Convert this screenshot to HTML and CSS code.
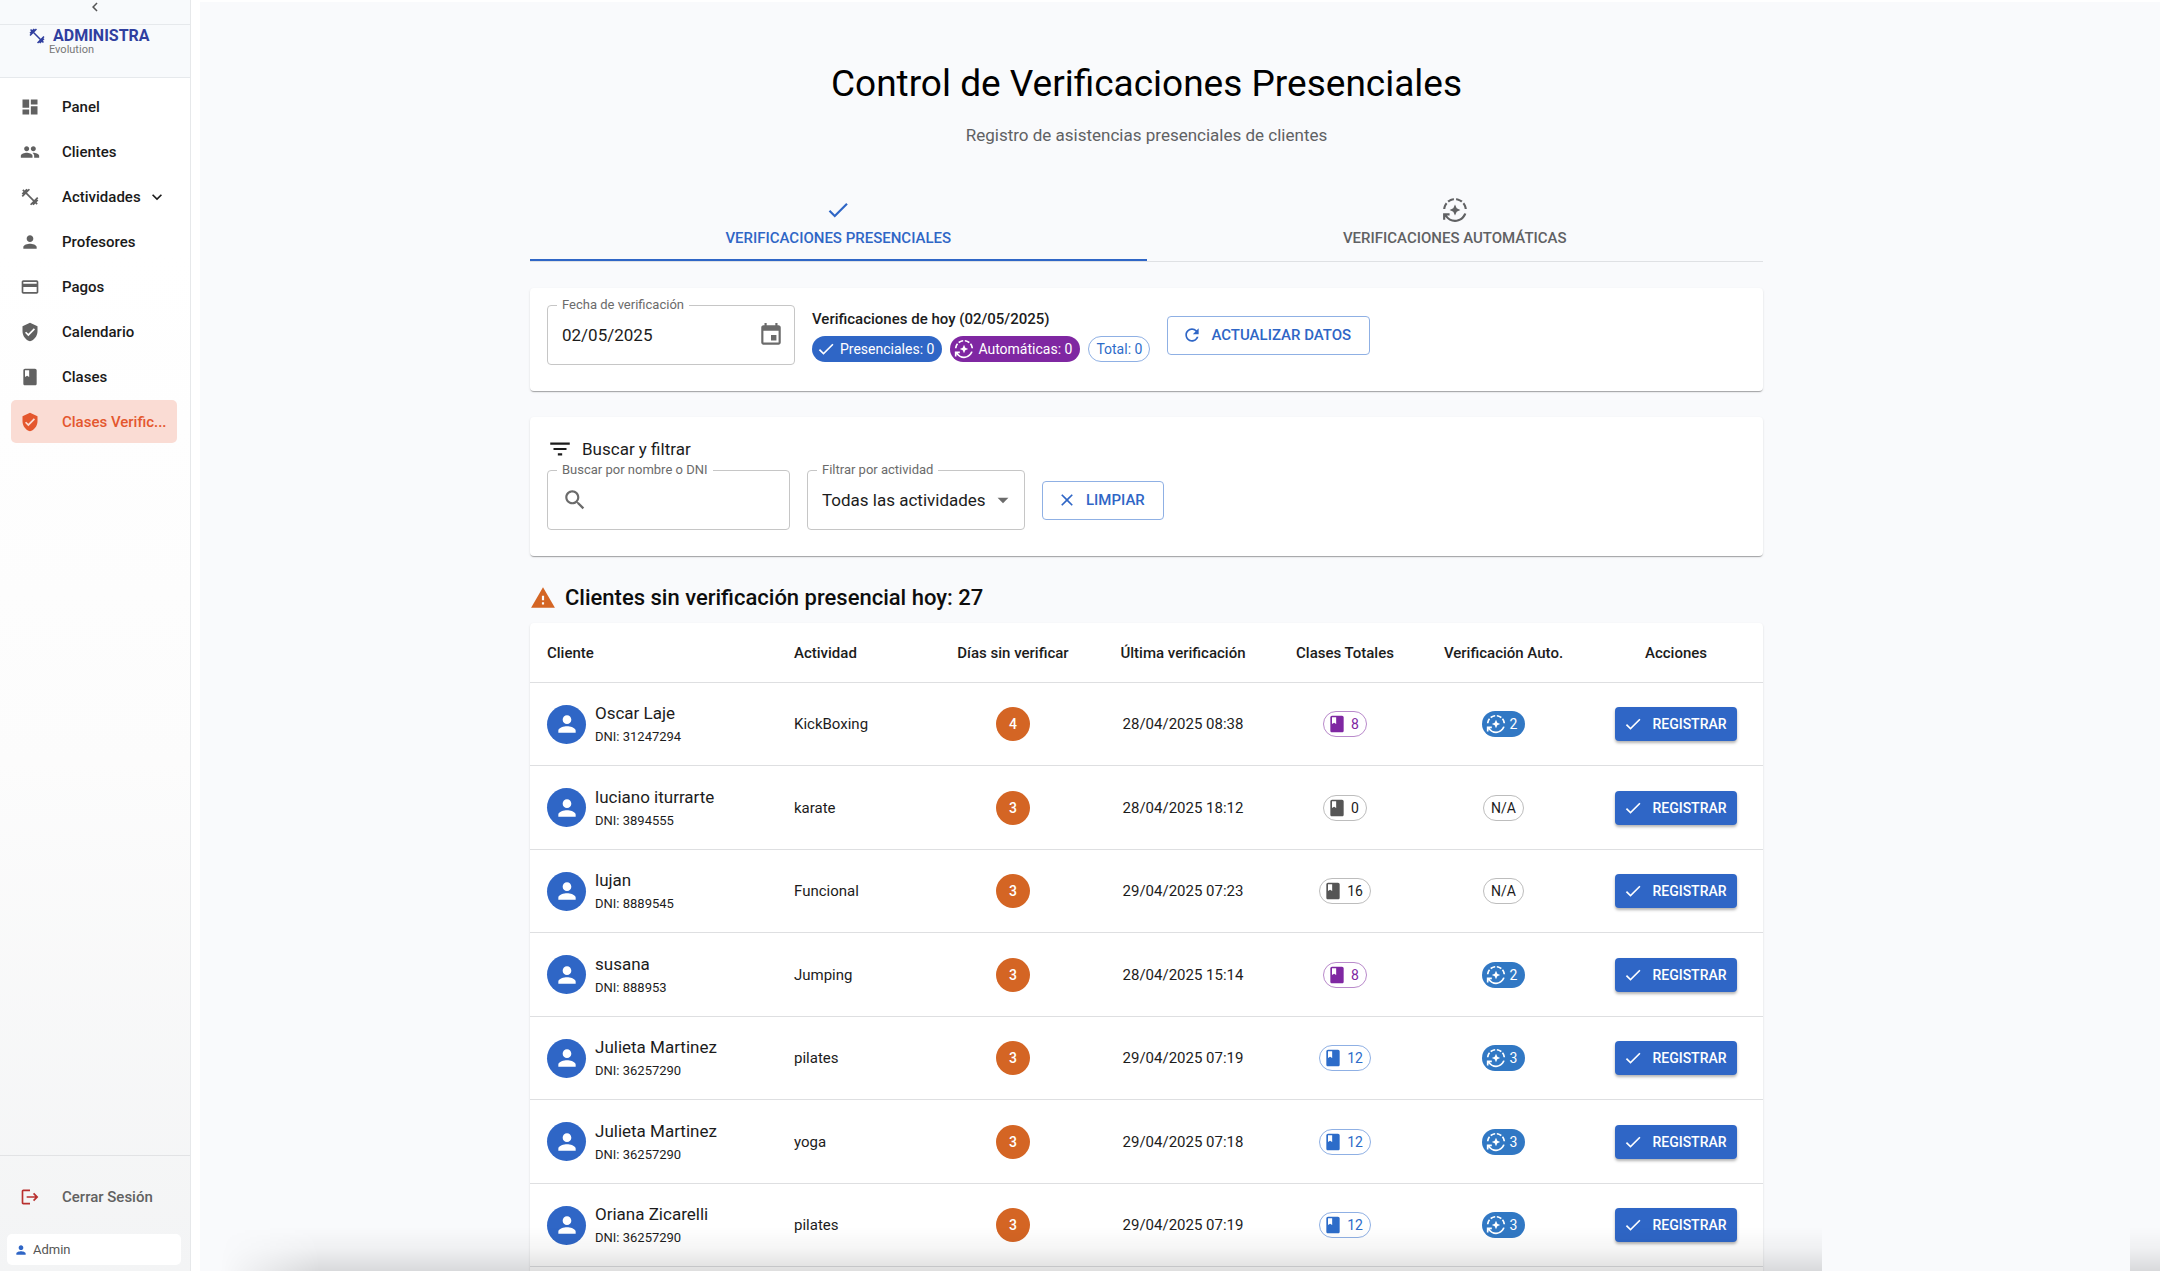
FILE: index.html
```html
<!DOCTYPE html>
<html lang="es">
<head>
<meta charset="utf-8">
<meta name="viewport" content="width=device-width, initial-scale=1">
<title>Control de Verificaciones Presenciales</title>
<link rel="stylesheet" href="styles.css">
</head>
<body>
<svg class="sprite" aria-hidden="true">
  <symbol id="i-check" viewBox="0 0 24 24"><path d="M9 16.17 4.83 12l-1.42 1.41L9 19 21 7l-1.41-1.41z"/></symbol>
  <symbol id="i-auto" viewBox="0 0 24 24"><path d="M19.03 3.56c-1.67-1.39-3.74-2.3-6.03-2.51v2.01c1.73.19 3.31.88 4.61 1.92l1.42-1.42zM11 3.06V1.05c-2.29.2-4.36 1.12-6.03 2.51l1.42 1.42C7.69 3.94 9.27 3.25 11 3.06zM4.98 6.39 3.56 4.97C2.17 6.64 1.26 8.71 1.05 11h2.01c.19-1.73.88-3.31 1.92-4.61zM20.94 11h2.01c-.21-2.29-1.12-4.36-2.51-6.03l-1.42 1.42c1.04 1.3 1.73 2.88 1.92 4.61zM7 12l3.44 1.56L12 17l1.56-3.44L17 12l-3.44-1.56L12 7l-1.56 3.44zM12 21c-3.11 0-5.85-1.59-7.46-4H7v-2H1v6h2v-2.7c1.99 2.84 5.27 4.7 9 4.7 4.87 0 9-3.17 10.44-7.56l-1.96-.45C19.25 18.48 15.92 21 12 21z"/></symbol>
  <symbol id="i-book" viewBox="0 0 24 24"><path d="M18 2H6c-1.1 0-2 .9-2 2v16c0 1.1.9 2 2 2h12c1.1 0 2-.9 2-2V4c0-1.1-.9-2-2-2zM6 4h5v8l-2.5-1.5L6 12V4z"/></symbol>
  <symbol id="i-shield" viewBox="0 0 24 24"><path d="M12 1 3 5v6c0 5.55 3.84 10.74 9 12 5.16-1.26 9-6.45 9-12V5l-9-4zm-2 16-4-4 1.41-1.41L10 14.17l6.59-6.59L18 9l-8 8z"/></symbol>
  <symbol id="i-dashboard" viewBox="0 0 24 24"><path d="M3 13h8V3H3v10zm0 8h8v-6H3v6zm10 0h8V11h-8v10zm0-18v6h8V3h-8z"/></symbol>
  <symbol id="i-people" viewBox="0 0 24 24"><path d="M16 11c1.66 0 2.99-1.34 2.99-3S17.66 5 16 5c-1.66 0-3 1.34-3 3s1.34 3 3 3zm-8 0c1.66 0 2.99-1.34 2.99-3S9.66 5 8 5C6.34 5 5 6.34 5 8s1.34 3 3 3zm0 2c-2.33 0-7 1.17-7 3.5V19h14v-2.5c0-2.33-4.67-3.5-7-3.5zm8 0c-.29 0-.62.02-.97.05 1.16.84 1.97 1.97 1.97 3.45V19h6v-2.5c0-2.33-4.67-3.5-7-3.5z"/></symbol>
  <symbol id="i-person" viewBox="0 0 24 24"><path d="M12 12c2.21 0 4-1.79 4-4s-1.79-4-4-4-4 1.79-4 4 1.79 4 4 4zm0 2c-2.67 0-8 1.34-8 4v2h16v-2c0-2.66-5.33-4-8-4z"/></symbol>
  <symbol id="i-card" viewBox="0 0 24 24"><path d="M20 4H4c-1.11 0-1.99.89-1.99 2L2 18c0 1.11.89 2 2 2h16c1.11 0 2-.89 2-2V6c0-1.11-.89-2-2-2zm0 14H4v-6h16v6zm0-10H4V6h16v2z"/></symbol>
  <symbol id="i-gym" viewBox="0 0 24 24"><path d="M20.57 14.86 22 13.43 20.57 12 17 15.57 8.43 7 12 3.43 10.57 2 9.14 3.43 7.71 2 5.57 4.14 4.14 2.71 2.71 4.14l1.43 1.43L2 7.71l1.43 1.43L2 10.57 3.43 12 7 8.43 15.57 17 12 20.57 13.43 22l1.43-1.43L16.29 22l2.14-2.14 1.43 1.43 1.43-1.43-1.43-1.43L22 16.29z"/></symbol>
  <symbol id="i-logout" viewBox="0 0 24 24"><path d="m17 7-1.41 1.41L18.17 11H8v2h10.17l-2.58 2.58L17 17l5-5zM4 5h8V3H4c-1.1 0-2 .9-2 2v14c0 1.1.9 2 2 2h8v-2H4V5z"/></symbol>
  <symbol id="i-left" viewBox="0 0 24 24"><path d="M15.41 7.41 14 6l-6 6 6 6 1.41-1.41L10.83 12z"/></symbol>
  <symbol id="i-down" viewBox="0 0 24 24"><path d="M16.59 8.59 12 13.17 7.41 8.59 6 10l6 6 6-6z"/></symbol>
  <symbol id="i-event" viewBox="0 0 24 24"><path d="M17 12h-5v5h5v-5zM16 1v2H8V1H6v2H5c-1.11 0-1.99.9-1.99 2L3 19c0 1.1.89 2 2 2h14c1.1 0 2-.9 2-2V5c0-1.1-.9-2-2-2h-1V1h-2zm3 18H5V8h14v11z"/></symbol>
  <symbol id="i-refresh" viewBox="0 0 24 24"><path d="M17.65 6.35C16.2 4.9 14.21 4 12 4c-4.42 0-7.99 3.58-7.99 8s3.57 8 7.99 8c3.73 0 6.84-2.55 7.73-6h-2.08c-.82 2.33-3.04 4-5.65 4-3.31 0-6-2.69-6-6s2.69-6 6-6c1.66 0 3.14.69 4.22 1.78L13 11h7V4l-2.35 2.35z"/></symbol>
  <symbol id="i-close" viewBox="0 0 24 24"><path d="M19 6.41 17.59 5 12 10.59 6.41 5 5 6.41 10.59 12 5 17.59 6.41 19 12 13.41 17.59 19 19 17.59 13.41 12z"/></symbol>
  <symbol id="i-search" viewBox="0 0 24 24"><path d="M15.5 14h-.79l-.28-.27C15.41 12.59 16 11.11 16 9.5 16 5.91 13.09 3 9.5 3S3 5.91 3 9.5 5.91 16 9.5 16c1.61 0 3.09-.59 4.23-1.57l.27.28v.79l5 4.99L20.49 19l-4.99-5zm-6 0C7.01 14 5 11.99 5 9.5S7.01 5 9.5 5 14 7.01 14 9.5 11.99 14 9.5 14z"/></symbol>
  <symbol id="i-filter" viewBox="0 0 24 24"><path d="M10 18h4v-2h-4v2zM3 6v2h18V6H3zm3 7h12v-2H6v2z"/></symbol>
  <symbol id="i-warning" viewBox="0 0 24 24"><path d="M1 21h22L12 2 1 21zm12-3h-2v-2h2v2zm0-4h-2v-4h2v4z"/></symbol>
  <symbol id="i-drop" viewBox="0 0 24 24"><path d="m7 10 5 5 5-5z"/></symbol>
</svg>

<div class="app">
  <aside class="sidebar">
    <div class="sidebar-top"><button class="collapse" type="button" aria-label="Contraer menú"><svg class="icon s"><use href="#i-left"/></svg></button></div>
    <div class="brand">
      <div class="brand-name"><svg class="icon s"><use href="#i-gym"/></svg>ADMINISTRA</div>
      <div class="brand-sub">Evolution</div>
    </div>
    <nav class="nav">
      <a href="#"><svg class="icon m"><use href="#i-dashboard"/></svg><span>Panel</span></a>
      <a href="#"><svg class="icon m"><use href="#i-people"/></svg><span>Clientes</span></a>
      <a href="#"><svg class="icon m"><use href="#i-gym"/></svg><span>Actividades</span><svg class="icon m chevron"><use href="#i-down"/></svg></a>
      <a href="#"><svg class="icon m"><use href="#i-person"/></svg><span>Profesores</span></a>
      <a href="#"><svg class="icon m"><use href="#i-card"/></svg><span>Pagos</span></a>
      <a href="#"><svg class="icon m"><use href="#i-shield"/></svg><span>Calendario</span></a>
      <a href="#"><svg class="icon m"><use href="#i-book"/></svg><span>Clases</span></a>
      <a href="#" class="active" aria-current="page"><svg class="icon m"><use href="#i-shield"/></svg><span>Clases Verific...</span></a>
    </nav>
    <div class="sidebar-foot">
      <a href="#" class="logout"><svg class="icon m"><use href="#i-logout"/></svg><span>Cerrar Sesión</span></a>
      <div class="user"><svg class="icon xs"><use href="#i-person"/></svg>Admin</div>
    </div>
  </aside>

  <main class="main">
    <div class="container">
      <h1>Control de Verificaciones Presenciales</h1>
      <p class="subtitle">Registro de asistencias presenciales de clientes</p>

      <div class="tabs" role="tablist">
        <button type="button" role="tab" aria-selected="true" class="tab selected"><svg class="icon xl"><use href="#i-check"/></svg>VERIFICACIONES PRESENCIALES</button>
        <button type="button" role="tab" aria-selected="false" class="tab"><svg class="icon xl"><use href="#i-auto"/></svg>VERIFICACIONES AUTOMÁTICAS</button>
      </div>

      <section class="card row">
        <div class="field date">
          <label for="fecha">Fecha de verificación</label>
          <input id="fecha" type="text" value="02/05/2025">
          <button type="button" class="icon-button" aria-label="Elegir fecha"><svg class="icon xl"><use href="#i-event"/></svg></button>
        </div>
        <div class="summary">
          <h2>Verificaciones de hoy (02/05/2025)</h2>
          <div class="chips">
            <span class="chip primary"><svg class="icon m"><use href="#i-check"/></svg>Presenciales: 0</span>
            <span class="chip purple"><svg class="icon m"><use href="#i-auto"/></svg>Automáticas: 0</span>
            <span class="chip line-blue">Total: 0</span>
          </div>
        </div>
        <button type="button" class="btn outlined"><svg class="icon m"><use href="#i-refresh"/></svg>ACTUALIZAR DATOS</button>
      </section>

      <section class="card">
        <h2 class="filter-title"><svg class="icon xl"><use href="#i-filter"/></svg>Buscar y filtrar</h2>
        <div class="row">
          <div class="field search">
            <label for="buscar">Buscar por nombre o DNI</label>
            <svg class="icon xl"><use href="#i-search"/></svg>
            <input id="buscar" type="text">
          </div>
          <div class="field activity">
            <label for="actividad">Filtrar por actividad</label>
            <select id="actividad"><option>Todas las actividades</option></select>
            <svg class="icon xl drop"><use href="#i-drop"/></svg>
          </div>
          <button type="button" class="btn outlined"><svg class="icon m"><use href="#i-close"/></svg>LIMPIAR</button>
        </div>
      </section>

      <h2 class="section-title"><svg class="icon xl"><use href="#i-warning"/></svg>Clientes sin verificación presencial hoy: 27</h2>

      <div class="table-card">
        <table>
          <colgroup><col class="c1"><col class="c2"><col class="c3"><col class="c4"><col class="c5"><col class="c6"><col class="c7"></colgroup>
          <thead>
            <tr><th scope="col">Cliente</th><th scope="col">Actividad</th><th scope="col">Días sin verificar</th><th scope="col">Última verificación</th><th scope="col">Clases Totales</th><th scope="col">Verificación Auto.</th><th scope="col">Acciones</th></tr>
          </thead>
          <tbody>
            <tr>
              <td><div class="client"><span class="avatar"><svg class="icon xl"><use href="#i-person"/></svg></span><div><div class="name">Oscar Laje</div><div class="dni">DNI: 31247294</div></div></div></td>
              <td>KickBoxing</td><td><span class="days">4</span></td><td>28/04/2025 08:38</td>
              <td><span class="chip line-purple"><svg class="icon m"><use href="#i-book"/></svg>8</span></td>
              <td><span class="chip info"><svg class="icon m"><use href="#i-auto"/></svg>2</span></td>
              <td><button type="button" class="btn filled"><svg class="icon m"><use href="#i-check"/></svg>REGISTRAR</button></td>
            </tr>
            <tr>
              <td><div class="client"><span class="avatar"><svg class="icon xl"><use href="#i-person"/></svg></span><div><div class="name">luciano iturrarte</div><div class="dni">DNI: 3894555</div></div></div></td>
              <td>karate</td><td><span class="days">3</span></td><td>28/04/2025 18:12</td>
              <td><span class="chip line-gray"><svg class="icon m"><use href="#i-book"/></svg>0</span></td>
              <td><span class="chip line-gray">N/A</span></td>
              <td><button type="button" class="btn filled"><svg class="icon m"><use href="#i-check"/></svg>REGISTRAR</button></td>
            </tr>
            <tr>
              <td><div class="client"><span class="avatar"><svg class="icon xl"><use href="#i-person"/></svg></span><div><div class="name">lujan</div><div class="dni">DNI: 8889545</div></div></div></td>
              <td>Funcional</td><td><span class="days">3</span></td><td>29/04/2025 07:23</td>
              <td><span class="chip line-gray"><svg class="icon m"><use href="#i-book"/></svg>16</span></td>
              <td><span class="chip line-gray">N/A</span></td>
              <td><button type="button" class="btn filled"><svg class="icon m"><use href="#i-check"/></svg>REGISTRAR</button></td>
            </tr>
            <tr>
              <td><div class="client"><span class="avatar"><svg class="icon xl"><use href="#i-person"/></svg></span><div><div class="name">susana</div><div class="dni">DNI: 888953</div></div></div></td>
              <td>Jumping</td><td><span class="days">3</span></td><td>28/04/2025 15:14</td>
              <td><span class="chip line-purple"><svg class="icon m"><use href="#i-book"/></svg>8</span></td>
              <td><span class="chip info"><svg class="icon m"><use href="#i-auto"/></svg>2</span></td>
              <td><button type="button" class="btn filled"><svg class="icon m"><use href="#i-check"/></svg>REGISTRAR</button></td>
            </tr>
            <tr>
              <td><div class="client"><span class="avatar"><svg class="icon xl"><use href="#i-person"/></svg></span><div><div class="name">Julieta Martinez</div><div class="dni">DNI: 36257290</div></div></div></td>
              <td>pilates</td><td><span class="days">3</span></td><td>29/04/2025 07:19</td>
              <td><span class="chip line-blue"><svg class="icon m"><use href="#i-book"/></svg>12</span></td>
              <td><span class="chip info"><svg class="icon m"><use href="#i-auto"/></svg>3</span></td>
              <td><button type="button" class="btn filled"><svg class="icon m"><use href="#i-check"/></svg>REGISTRAR</button></td>
            </tr>
            <tr>
              <td><div class="client"><span class="avatar"><svg class="icon xl"><use href="#i-person"/></svg></span><div><div class="name">Julieta Martinez</div><div class="dni">DNI: 36257290</div></div></div></td>
              <td>yoga</td><td><span class="days">3</span></td><td>29/04/2025 07:18</td>
              <td><span class="chip line-blue"><svg class="icon m"><use href="#i-book"/></svg>12</span></td>
              <td><span class="chip info"><svg class="icon m"><use href="#i-auto"/></svg>3</span></td>
              <td><button type="button" class="btn filled"><svg class="icon m"><use href="#i-check"/></svg>REGISTRAR</button></td>
            </tr>
            <tr>
              <td><div class="client"><span class="avatar"><svg class="icon xl"><use href="#i-person"/></svg></span><div><div class="name">Oriana Zicarelli</div><div class="dni">DNI: 36257290</div></div></div></td>
              <td>pilates</td><td><span class="days">3</span></td><td>29/04/2025 07:19</td>
              <td><span class="chip line-blue"><svg class="icon m"><use href="#i-book"/></svg>12</span></td>
              <td><span class="chip info"><svg class="icon m"><use href="#i-auto"/></svg>3</span></td>
              <td><button type="button" class="btn filled"><svg class="icon m"><use href="#i-check"/></svg>REGISTRAR</button></td>
            </tr>
          </tbody>
        </table>
      </div>
    </div>
  </main>
</div>
<div class="shade shade-left"></div>
<div class="shade shade-right"></div>
</body>
</html>
```

FILE: styles.css
```css
:root {
  --blue: #2f66c6;
  --blue-line: #8fb0e4;
  --purple: #7f27a2;
  --info: #3178c4;
  --orange: #d46524;
  --text: #1c1c1c;
  --muted: #606163;
  --bg: #f9fafc;
}
* { box-sizing: border-box; }
body {
  margin: 0;
  font-family: Roboto, "Liberation Sans", sans-serif;
  font-size: 15px;
  line-height: 22px;
  color: var(--text);
  background: #fff;
}
h1, h2, p { margin: 0; }
button, input, select { font: inherit; color: inherit; }
button { cursor: pointer; }
.sprite { display: none; }
.icon { fill: currentColor; flex: none; display: block; }
.xs { width: 14px; height: 14px; }
.s { width: 18px; height: 18px; }
.m { width: 20px; height: 20px; }
.xl { width: 26px; height: 26px; }

.app {
  display: grid;
  grid-template-columns: 191px minmax(0, 1fr);
  height: 100vh;
  overflow: hidden;
}

/* Sidebar */
.sidebar {
  display: flex;
  flex-direction: column;
  border-right: 1px solid #e6e8ea;
  background: linear-gradient(#fff 20%, #fcfcfc 60%, #f3f4f5);
}
.sidebar-top {
  display: flex;
  justify-content: center;
  height: 25px;
  border-bottom: 1px solid #e6e9ec;
  background: #f8fafc;
}
.collapse {
  align-self: flex-start;
  height: 14px;
  padding: 0;
  border: 0;
  background: none;
  color: #555;
  display: flex;
  align-items: center;
}
.brand {
  height: 53px;
  padding: 2px 28px;
  border-bottom: 1px solid #e6e9ec;
  background: #f8fafc;
}
.brand-name {
  display: flex;
  align-items: center;
  gap: 7px;
  height: 17px;
  font-weight: 700;
  font-size: 16px;
  color: #303f9f;
}
.brand-sub { padding-left: 21px; font-size: 11px; line-height: 12px; color: #777; }
.nav { display: flex; flex-direction: column; gap: 2px; padding: 7px 13px 0 11px; }
.nav a, .logout {
  display: flex;
  align-items: center;
  height: 43px;
  padding: 0 9px;
  border-radius: 5px;
  color: #1a1a1a;
  font-weight: 500;
  text-decoration: none;
}
.nav .icon, .logout .icon { color: #616161; }
.nav span, .logout span { margin-left: 22px; white-space: nowrap; }
.nav .chevron { margin-left: 6px; color: #1a1a1a; }
.nav .active { background: #fadcd4; color: #e4572e; }
.nav .active .icon { color: #e4572e; }
.sidebar-foot {
  margin-top: auto;
  padding: 19px 9px 6px 7px;
  border-top: 1px solid #e2e3e5;
}
.logout { margin-bottom: 16px; padding: 0 13px; color: #616161; }
.logout .icon { color: #b8302f; }
.user {
  display: flex;
  align-items: center;
  gap: 5px;
  height: 31px;
  padding: 0 7px;
  border-radius: 5px;
  background: #fff;
  font-size: 13px;
  color: #555;
}
.user .icon { color: var(--blue); }

/* Main column */
.main {
  margin: 2px 0 0 9px;
  padding: 55px 67px 0 0;
  background: var(--bg);
  overflow: hidden;
}
.container { max-width: 1233px; margin: 0 auto; }
h1 {
  font-size: 37px;
  line-height: 54px;
  font-weight: 400;
  text-align: center;
  color: #000;
}
.subtitle {
  margin-top: 12px;
  font-size: 17px;
  line-height: 24px;
  text-align: center;
  color: var(--muted);
}
.tabs {
  display: grid;
  grid-template-columns: 1fr 1fr;
  margin: 38px 0 26px;
  border-bottom: 1px solid #dfe1e4;
}
.tab {
  display: flex;
  flex-direction: column;
  align-items: center;
  gap: 4px;
  padding: 12px 0 10px;
  border: 0;
  border-bottom: 2px solid transparent;
  background: none;
  font-weight: 500;
  color: var(--muted);
}
.tab.selected { color: var(--blue); border-color: var(--blue); }

.card, .table-card {
  border-radius: 4px;
  background: #fff;
  box-shadow: 0 2px 1px -1px rgba(0,0,0,.2), 0 1px 1px rgba(0,0,0,.14), 0 1px 3px rgba(0,0,0,.08);
}
.card { padding: 17px 17px 26px; margin-bottom: 26px; }
.row { display: flex; align-items: center; gap: 17px; }

.field {
  position: relative;
  display: flex;
  align-items: center;
  height: 60px;
  padding: 0 14px;
  border: 1px solid #c6c6c6;
  border-radius: 4px;
  color: #6b6b6b;
}
.field label {
  position: absolute;
  top: -9px;
  left: 9px;
  padding: 0 5px;
  background: #fff;
  font-size: 13px;
  line-height: 16px;
  color: #6b6b6b;
}
.field input, .field select {
  flex: 1;
  min-width: 0;
  height: 40px;
  padding: 0;
  border: 0;
  outline: 0;
  background: none;
  appearance: none;
  font-size: 17px;
  color: var(--text);
}
.date { width: 248px; }
.date, .activity { padding-right: 8px; }
.search { width: 243px; }
.activity { width: 218px; }
.icon-button { padding: 0; border: 0; background: none; color: #6b6b6b; }
.date .icon-button { margin-right: 2px; }
.drop { pointer-events: none; }

.summary h2 { font-size: 15px; line-height: 22px; font-weight: 500; }
.chips { display: flex; gap: 8px; margin-top: 6px; }
.chip {
  display: inline-flex;
  align-items: center;
  justify-content: center;
  gap: 4px;
  height: 26px;
  padding: 0 7px 0 3px;
  border: 1px solid transparent;
  border-radius: 13px;
  font-size: 14px;
  line-height: 16px;
  vertical-align: middle;
}
.chip.primary { background: var(--blue); color: #fff; }
.chip.purple { background: var(--purple); color: #fff; }
.chip.info { background: var(--info); color: #fff; }
.chip.line-blue { border-color: var(--blue-line); color: #2d6cc9; }
.chip.line-purple { border-color: #b98acb; color: var(--purple); }
.chip.line-gray { border-color: #bdbdbd; color: var(--text); }
.chip.line-gray .icon { color: #555; }
.chip:not(:has(svg)) { padding: 0 7px; }

.btn {
  display: inline-flex;
  align-items: center;
  gap: 9px;
  border-radius: 4px;
  font-weight: 500;
  vertical-align: middle;
}
.btn.outlined {
  height: 39px;
  padding: 0 18px 0 14px;
  border: 1px solid var(--blue-line);
  background: #fff;
  color: var(--blue);
}
.btn.filled {
  height: 34px;
  padding: 0 10px 0 8px;
  border: 0;
  background: var(--blue);
  color: #fff;
  font-size: 14px;
  box-shadow: 0 2px 3px rgba(0,0,0,.3);
}

.filter-title {
  display: flex;
  align-items: center;
  gap: 9px;
  height: 36px;
  font-size: 17px;
  font-weight: 400;
  padding-bottom: 6px;
}
.section-title {
  display: flex;
  align-items: center;
  gap: 9px;
  height: 32px;
  margin-bottom: 9px;
  font-size: 22px;
  font-weight: 500;
  color: #0d0d0d;
}
.section-title .icon { color: var(--orange); }

/* Client table */
.table-card { padding-bottom: 32px; }
table { width: 100%; border-collapse: separate; border-spacing: 0; table-layout: fixed; }
.c1 { width: 247px; }
.c2 { width: 155px; }
.c3 { width: 162px; }
.c4 { width: 178px; }
.c5 { width: 146px; }
.c6 { width: 171px; }
.c7 { width: 174px; }
th, td { padding: 0; border-bottom: 1px solid #dedfe1; text-align: center; white-space: nowrap; }
th:nth-child(-n+2), td:nth-child(-n+2) { text-align: left; padding-left: 17px; }
th { height: 60px; font-weight: 500; }
td { height: 83px; }
tr:nth-child(even) td { height: 84px; }
.client { display: flex; align-items: center; gap: 9px; }
.avatar {
  display: grid;
  place-items: center;
  width: 39px;
  height: 39px;
  border-radius: 50%;
  background: var(--blue);
  color: #fff;
}
.name { font-size: 17px; line-height: 26px; }
.dni { font-size: 13px; line-height: 22px; }
.days {
  display: inline-grid;
  place-items: center;
  width: 34px;
  height: 34px;
  border-radius: 50%;
  background: var(--orange);
  color: #fff;
  font-size: 14px;
  font-weight: 500;
  vertical-align: middle;
}

/* Soft shade along the bottom edge of the window */
.shade {
  position: fixed;
  bottom: 0;
  height: 44px;
  background: linear-gradient(rgba(0,0,0,0), rgba(0,0,0,.04) 50%, rgba(0,0,0,.13));
  pointer-events: none;
}
.shade-left {
  left: 220px;
  right: 338px;
  mask-image: linear-gradient(90deg, transparent, #000 100px);
}
.shade-right { right: 0; width: 30px; }
```
